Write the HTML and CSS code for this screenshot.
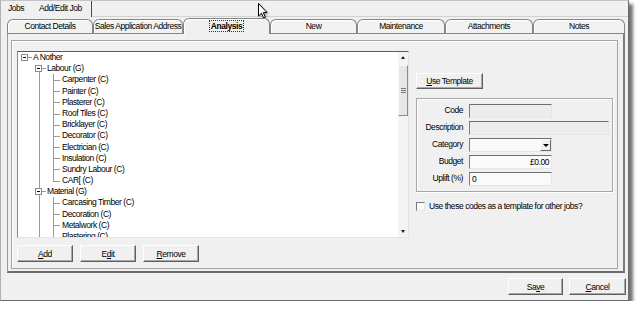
FILE: index.html
```html
<!DOCTYPE html>
<html lang="en">
<head>
    <meta charset="UTF-8">
    <title>Add/Edit Job - Analysis</title>
    <link rel="stylesheet" href="styles.css">
</head>
<body>
    <div class="window">
        <div class="topbar">
            <span class="top-tab jobs">Jobs</span>
            <span class="top-tab current">Add/Edit Job</span>
            <span class="top-fill"></span>
        </div>

        <div class="tabs">
            <div class="tab" style="width:86px">Contact Details</div>
            <div class="tab" style="width:90px">Sales Application Address</div>
            <div class="tab active" style="width:87px"><span class="focus">Analysis</span></div>
            <div class="tab" style="width:87px">New</div>
            <div class="tab" style="width:88px">Maintenance</div>
            <div class="tab" style="width:88px">Attachments</div>
            <div class="tab" style="width:92px">Notes</div>
        </div>

        <div class="panel">
            <div class="frame">
                <div class="left-col">
                    <div class="listbox">
                        <ul class="tree">
                            <li>
                                <div class="row root"><span class="toggle"></span>A Nother</div>
                                <ul class="groups">
                                    <li>
                                        <div class="row group"><span class="toggle"></span>Labour (G)</div>
                                        <ul class="leaves">
                                            <li>Carpenter (C)</li>
                                            <li>Painter (C)</li>
                                            <li>Plasterer (C)</li>
                                            <li>Roof Tiles (C)</li>
                                            <li>Bricklayer (C)</li>
                                            <li>Decorator (C)</li>
                                            <li>Electrician (C)</li>
                                            <li>Insulation (C)</li>
                                            <li>Sundry Labour (C)</li>
                                            <li>CAR[ (C)</li>
                                        </ul>
                                    </li>
                                    <li>
                                        <div class="row group"><span class="toggle"></span>Material (G)</div>
                                        <ul class="leaves open-end">
                                            <li>Carcasing Timber (C)</li>
                                            <li>Decoration (C)</li>
                                            <li>Metalwork (C)</li>
                                            <li>Plastering (C)</li>
                                            <li>Plumbing (C)</li>
                                        </ul>
                                    </li>
                                </ul>
                            </li>
                        </ul>
                        <div class="scrollbar">
                            <div class="sb-arrow"><span class="tri up"></span></div>
                            <div class="sb-thumb"><span class="grip"></span></div>
                            <div class="sb-track"></div>
                            <div class="sb-arrow"><span class="tri down"></span></div>
                        </div>
                    </div>
                    <div class="btn-row">
                        <button class="btn list-btn"><u>A</u>dd</button>
                        <button class="btn list-btn">E<u>d</u>it</button>
                        <button class="btn list-btn"><u>R</u>emove</button>
                    </div>
                </div>

                <div class="right-col">
                    <button class="btn tmpl-btn"><u>U</u>se Template</button>
                    <div class="group-box">
                        <div class="field">
                            <span class="label">Code</span>
                            <span class="input dim"></span>
                        </div>
                        <div class="field">
                            <span class="label">Description</span>
                            <span class="input dim wide"></span>
                        </div>
                        <div class="field">
                            <span class="label">Category</span>
                            <span class="input combo"><span class="drop"><span class="tri down"></span></span></span>
                        </div>
                        <div class="field">
                            <span class="label">Budget</span>
                            <span class="input num">£0.00</span>
                        </div>
                        <div class="field">
                            <span class="label">Uplift (%)</span>
                            <span class="input">0</span>
                        </div>
                    </div>
                    <div class="check">
                        <span class="check-box"></span>
                        <span>Use these codes as a template for other jobs?</span>
                    </div>
                </div>
            </div>
        </div>

        <div class="footer">
            <button class="btn save-btn">Sa<u>v</u>e</button>
            <button class="btn cancel-btn"><u>C</u>ancel</button>
        </div>

        <svg class="cursor" width="12" height="17" viewBox="0 0 12 17">
            <path d="M0.5 0.5 L0.5 13 L3.5 10.2 L5.6 15 L7.4 14.2 L5.3 9.5 L9 9.5 Z" fill="#fff" stroke="#000" stroke-width="1" stroke-linejoin="round"/>
        </svg>
    </div>
</body>
</html>
```

FILE: styles.css
```css
/* styles.css */
body {
    margin: 0;
    background-color: #fff;
    font-family: 'Liberation Sans', Arial, sans-serif;
    font-size: 8.5px;
    letter-spacing: -0.45px;
    color: #000;
}

.window {
    position: relative;
    width: 629px;
    height: 301px;
    box-sizing: border-box;
    background-color: #f0f0f0;
    border: 1px solid;
    border-color: #c4c4c4 #6a6a6a #6a6a6a #b0b0b0;
    box-shadow: 4px 4px 3px rgba(0, 0, 0, 0.55);
}

/* top level tabs */
.topbar {
    display: flex;
    height: 16px;
}

.top-tab {
    line-height: 15px;
}

.top-tab.jobs {
    width: 22px;
    padding-left: 7px;
}

.top-tab.current {
    width: 61px;
    text-align: center;
    border-right: 1px solid #4a4a4a;
}

.top-fill {
    flex: 1;
    border-bottom: 1px solid #d2d2d2;
}

/* page tabs */
.tabs {
    display: flex;
    align-items: flex-end;
    height: 14px;
    margin: 2px 0 0 6px;
}

.tab {
    height: 14px;
    box-sizing: border-box;
    border: 1px solid #858585;
    border-bottom: none;
    border-radius: 6px 6px 0 0;
    text-align: center;
    line-height: 12px;
    white-space: nowrap;
    background-color: #f2f2f2;
    box-shadow: inset 1px 1px #fff;
}

.tab.active {
    position: relative;
    top: 1px;
    z-index: 1;
    height: 16px;
    font-weight: bold;
    line-height: 14px;
    background-color: #f0f0f0;
}

.focus {
    border: 1px dotted #333;
    padding: 0 1px;
}

.panel {
    width: 618px;
    height: 240px;
    box-sizing: border-box;
    margin-left: 6px;
    border-style: solid;
    border-width: 1px 2px 2px 1px;
    border-color: #858585 #7c7c7c #6c6c6c #9a9a9a;
}

.frame {
    display: flex;
    gap: 7px;
    width: 607px;
    height: 229px;
    box-sizing: border-box;
    margin: 6px 0 0 3px;
    padding: 10px 0 0 5px;
    border: 1px solid #a4a4a4;
    box-shadow: inset 1px 1px #fff;
}

/* tree list */
.left-col {
    width: 392px;
    display: flex;
    flex-direction: column;
}

.listbox {
    display: flex;
    height: 187px;
    box-sizing: border-box;
    border: 1px solid;
    border-color: #5a5a5a #e4e4e4 #e4e4e4 #8a8a8a;
    background-color: #fff;
    overflow: hidden;
}

.tree {
    flex: 1;
    list-style: none;
    margin: 0;
    padding: 0;
    overflow: hidden;
}

.tree ul {
    list-style: none;
    margin: 0;
    padding: 0;
}

.row,
.leaves li {
    height: 11.2px;
    line-height: 11.2px;
    white-space: nowrap;
}

.row {
    display: flex;
    align-items: center;
}

.row.root {
    padding-left: 3px;
}

.row.group {
    padding-left: 17px;
}

.toggle {
    position: relative;
    width: 7px;
    height: 7px;
    box-sizing: border-box;
    margin-right: 5px;
    border: 1px solid #8a8a8a;
    background-color: #fff;
    z-index: 1;
}

/* minus sign */
.toggle::before {
    content: '';
    position: absolute;
    left: 1px;
    top: 2px;
    width: 3px;
    height: 1px;
    background-color: #000;
}

/* dash from box to label */
.toggle::after {
    content: '';
    position: absolute;
    left: 6px;
    top: 2px;
    width: 4px;
    height: 1px;
    background-color: #9a9a9a;
}

.groups {
    position: relative;
}

.groups::before {
    content: '';
    position: absolute;
    left: 21px;
    top: 8px;
    bottom: 0;
    width: 1px;
    background-color: #9a9a9a;
}

.leaves {
    margin-left: 35px !important;
}

.leaves li {
    position: relative;
    padding-left: 9px;
}

.leaves li::before {
    content: '';
    position: absolute;
    left: 0;
    top: 0;
    bottom: 0;
    width: 1px;
    background-color: #9a9a9a;
}

.leaves li:last-child::before {
    bottom: 50%;
}

.leaves.open-end li:last-child::before {
    bottom: 0;
}

.leaves li::after {
    content: '';
    position: absolute;
    left: 0;
    top: 50%;
    width: 7px;
    height: 1px;
    background-color: #9a9a9a;
}

/* scrollbar */
.scrollbar {
    width: 10px;
    display: flex;
    flex-direction: column;
    background-color: #f3f3f3;
}

.sb-arrow {
    height: 11px;
    display: flex;
    align-items: center;
    justify-content: center;
}

.tri {
    width: 0;
    height: 0;
    border-left: 2.5px solid transparent;
    border-right: 2.5px solid transparent;
}

.tri.up {
    border-bottom: 3px solid #222;
}

.tri.down {
    border-top: 3px solid #222;
}

.sb-thumb {
    height: 51px;
    margin-top: 2px;
    box-sizing: border-box;
    border: 1px solid;
    border-color: #fafafa #8a8a8a #8a8a8a #fafafa;
    background-color: #e6e6e6;
    display: flex;
    align-items: center;
    justify-content: center;
}

.grip {
    width: 5px;
    height: 6px;
    background: repeating-linear-gradient(#777 0 1px, #e6e6e6 1px 2px);
}

.sb-track {
    flex: 1;
}

/* buttons */
.btn {
    height: 17px;
    padding: 0;
    box-sizing: border-box;
    font: inherit;
    letter-spacing: inherit;
    color: #000;
    background-color: #f0f0f0;
    border: 1px solid;
    border-color: #fff #5e5e5e #5e5e5e #fff;
    box-shadow: inset -1px -1px #a8a8a8;
}

.btn-row {
    display: flex;
    gap: 7px;
    margin-top: 7px;
}

.list-btn {
    width: 56px;
}

/* right side */
.right-col {
    width: 197px;
    padding-top: 22px;
}

.tmpl-btn {
    width: 67px;
    height: 16px;
}

.group-box {
    height: 94px;
    box-sizing: border-box;
    margin-top: 9px;
    padding: 5px 0 0 1px;
    border: 1px solid #a8a8a8;
    box-shadow: inset 1px 1px #fff, 1px 1px #fff;
}

.field {
    display: flex;
    align-items: center;
    gap: 6px;
    height: 14px;
    margin-bottom: 3px;
}

.label {
    width: 45px;
    text-align: right;
    line-height: 12px;
    padding-bottom: 2px;
}

.input {
    position: relative;
    width: 83px;
    height: 14px;
    box-sizing: border-box;
    border: 1px solid;
    border-color: #6e6e6e #e6e6e6 #e6e6e6 #7e7e7e;
    background-color: #fafafa;
    padding: 0 2px;
    line-height: 12px;
}

.input.dim {
    background-color: #ececec;
}

.input.wide {
    width: 140px;
}

.input.num {
    text-align: right;
}

.drop {
    position: absolute;
    right: 0;
    top: 0;
    width: 11px;
    height: 12px;
    box-sizing: border-box;
    border: 1px solid;
    border-color: #fff #6a6a6a #6a6a6a #fff;
    background-color: #f0f0f0;
    display: flex;
    align-items: center;
    justify-content: center;
}

.drop .tri {
    border-left-width: 3px;
    border-right-width: 3px;
    border-top: 3px solid #000;
}

.check {
    display: flex;
    align-items: center;
    gap: 4px;
    margin-top: 9px;
}

.check-box {
    width: 9px;
    height: 9px;
    box-sizing: border-box;
    border: 1px solid;
    border-color: #7a7a7a #e6e6e6 #e6e6e6 #7a7a7a;
    background-color: #fafafa;
}

/* bottom buttons */
.footer {
    display: flex;
    justify-content: flex-end;
    gap: 6px;
    margin: 5px 2px 0 0;
}

.save-btn {
    width: 55px;
}

.cancel-btn {
    width: 57px;
}

.cursor {
    position: absolute;
    left: 257px;
    top: 2px;
    filter: drop-shadow(1px 1px 1px rgba(0, 0, 0, 0.35));
}
```
